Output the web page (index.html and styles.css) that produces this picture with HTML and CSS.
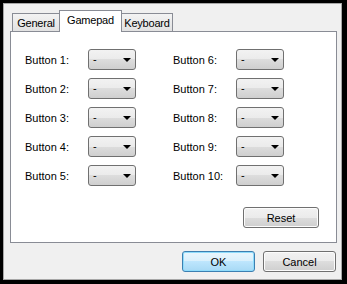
FILE: index.html
```html
<!DOCTYPE html>
<html lang="en">
<head>
  <meta charset="UTF-8">
  <title>Settings</title>
  <link rel="stylesheet" href="styles.css">
</head>
<body>
  <div class="dialog">
    <div class="tabs">
      <div class="tab tab-general">General</div>
      <div class="tab tab-gamepad active">Gamepad</div>
      <div class="tab tab-keyboard">Keyboard</div>
    </div>
    <div class="panel">
      <div class="cols">
        <div class="col">
          <div class="row"><span class="label">Button 1:</span><div class="combo">-<i class="arrow"></i></div></div>
          <div class="row"><span class="label">Button 2:</span><div class="combo">-<i class="arrow"></i></div></div>
          <div class="row"><span class="label">Button 3:</span><div class="combo">-<i class="arrow"></i></div></div>
          <div class="row"><span class="label">Button 4:</span><div class="combo">-<i class="arrow"></i></div></div>
          <div class="row"><span class="label">Button 5:</span><div class="combo">-<i class="arrow"></i></div></div>
        </div>
        <div class="col">
          <div class="row"><span class="label">Button 6:</span><div class="combo">-<i class="arrow"></i></div></div>
          <div class="row"><span class="label">Button 7:</span><div class="combo">-<i class="arrow"></i></div></div>
          <div class="row"><span class="label">Button 8:</span><div class="combo">-<i class="arrow"></i></div></div>
          <div class="row"><span class="label">Button 9:</span><div class="combo">-<i class="arrow"></i></div></div>
          <div class="row"><span class="label">Button 10:</span><div class="combo">-<i class="arrow"></i></div></div>
        </div>
      </div>
      <div class="reset-row">
        <button class="btn btn-reset">Reset</button>
      </div>
    </div>
    <div class="footer">
      <button class="btn btn-ok">OK</button>
      <button class="btn">Cancel</button>
    </div>
  </div>
</body>
</html>
```

FILE: styles.css
```css
body {
  margin: 0;
  background: #000;
  font-family: "Liberation Sans", Arial, sans-serif;
  font-size: 11px;
  color: #000;
}
.dialog {
  margin: 3px 0 0 3px;
  width: 339px;
  height: 277px;
  box-sizing: border-box;
  background: #f0f0f0;
  border: 1px solid #a7a7a7;
  padding: 6px 3px 0 6px;
  display: flex;
  flex-direction: column;
}
.tabs {
  display: flex;
  align-items: flex-end;
  height: 22px;
  padding-left: 2px;
  margin-bottom: -1px;
  position: relative;
  z-index: 1;
}
.tab {
  box-sizing: border-box;
  height: 18px;
  margin-bottom: 1px;
  border: 1px solid #898c95;
  border-bottom: none;
  background: linear-gradient(#f3f3f3, #e2e2e2);
  text-align: center;
  line-height: 18px;
  letter-spacing: -0.2px;
}
.tab-general { width: 48px; }
.tab-gamepad { width: 63px; margin-left: -1px; }
.tab-keyboard { width: 52px; margin-left: -1px; }
.tab.active {
  height: 22px;
  margin-bottom: 0;
  background: #fff;
  line-height: 19px;
}
.panel {
  width: 327px;
  height: 212px;
  box-sizing: border-box;
  border: 1px solid #898c95;
  background: #fff;
  padding: 17px 17px 0 14px;
}
.cols {
  display: flex;
  gap: 37px;
}
.col {
  display: flex;
  flex-direction: column;
  gap: 8px;
}
.row {
  display: flex;
  align-items: center;
  height: 21px;
}
.label {
  width: 63px;
}
.combo {
  position: relative;
  box-sizing: border-box;
  width: 48px;
  height: 21px;
  border: 1px solid #707070;
  border-radius: 3px;
  background: linear-gradient(#f2f2f2 0%, #ebebeb 50%, #dddddd 50%, #cfcfcf 100%);
  padding-left: 4px;
  line-height: 19px;
}
.arrow {
  position: absolute;
  right: 4px;
  top: 8px;
  border-left: 4px solid transparent;
  border-right: 4px solid transparent;
  border-top: 4px solid #000;
}
.reset-row {
  display: flex;
  justify-content: flex-end;
  margin-top: 21px;
}
.btn {
  box-sizing: border-box;
  width: 73px;
  height: 21px;
  border: 1px solid #707070;
  border-radius: 3px;
  background: linear-gradient(#f2f2f2 0%, #ebebeb 50%, #dddddd 50%, #cfcfcf 100%);
  box-shadow: inset 0 0 0 1px #fcfcfc;
  font-family: inherit;
  font-size: 11px;
  color: #000;
  padding: 0;
}
.btn-reset {
  width: 76px;
}
.btn-ok {
  border-color: #3c7fb1;
  background: linear-gradient(#eaf6fd 0%, #d9f0fc 50%, #bee6fd 50%, #a7d9f5 100%);
  box-shadow: inset 0 0 0 1px #8fdcfb;
}
.footer {
  display: flex;
  justify-content: flex-end;
  gap: 8px;
  margin-top: 8px;
  padding-right: 2px;
}
```
